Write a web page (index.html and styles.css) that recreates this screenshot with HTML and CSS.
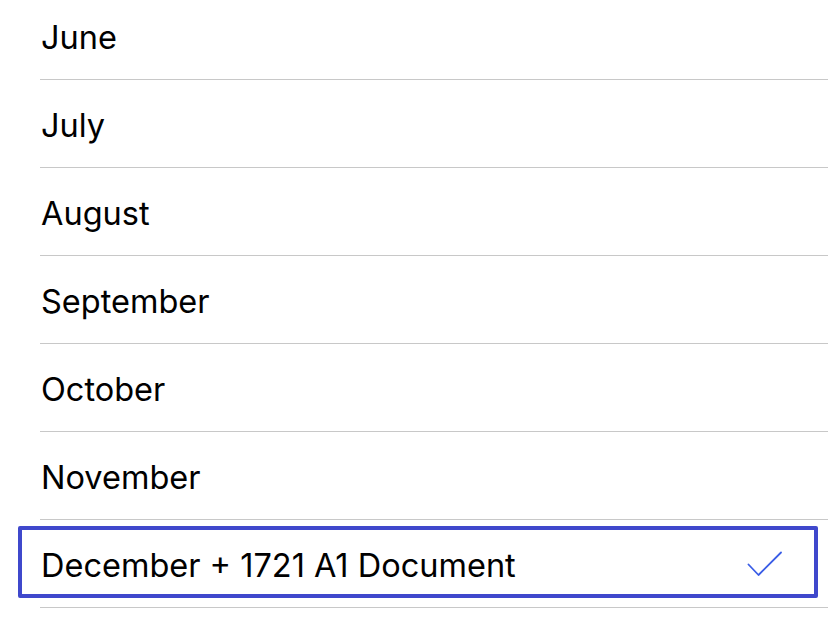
FILE: index.html
```html
<!DOCTYPE html>
<html>
<head>
<meta charset="utf-8">
<link rel="stylesheet" href="styles.css">
</head>
<body>
<ul class="list">
  <li class="row"><span class="label">June</span></li>
  <li class="row"><span class="label">July</span></li>
  <li class="row"><span class="label">August</span></li>
  <li class="row"><span class="label">September</span></li>
  <li class="row"><span class="label">October</span></li>
  <li class="row"><span class="label">November</span></li>
  <li class="row selected">
    <span class="label">December + 1721 A1 Document</span>
    <svg class="check" width="36" height="28" viewBox="0 0 36 28"><path d="M2.5 14.5 L12.5 25 L35 2.5" fill="none" stroke="#3a5de6" stroke-width="1.8" stroke-linecap="round" stroke-linejoin="round"/></svg>
  </li>
</ul>
</body>
</html>
```
FILE: styles.css
```css
html, body {
  margin: 0;
  padding: 0;
  background: #fff;
  overflow: hidden;
}
.list {
  list-style: none;
  margin: -8px 0 0 0;
  padding: 0 0 0 40px;
  font-family: "Inter", "Liberation Sans", sans-serif;
  font-size: 32.5px;
  color: #000;
}
.row {
  position: relative;
  height: 87px;
  border-bottom: 1px solid #c8c8c8;
  display: flex;
  align-items: center;
  padding-left: 1px;
  padding-right: 46px;
}
.label {
  flex: 1;
  white-space: nowrap;
  padding-top: 3px;
}
.selected::after {
  content: "";
  position: absolute;
  left: -22px;
  right: 10px;
  top: 6px;
  bottom: 9px;
  border: 4px solid #3f48cc;
  border-radius: 2px;
}
.check {
  display: block;
}
```
